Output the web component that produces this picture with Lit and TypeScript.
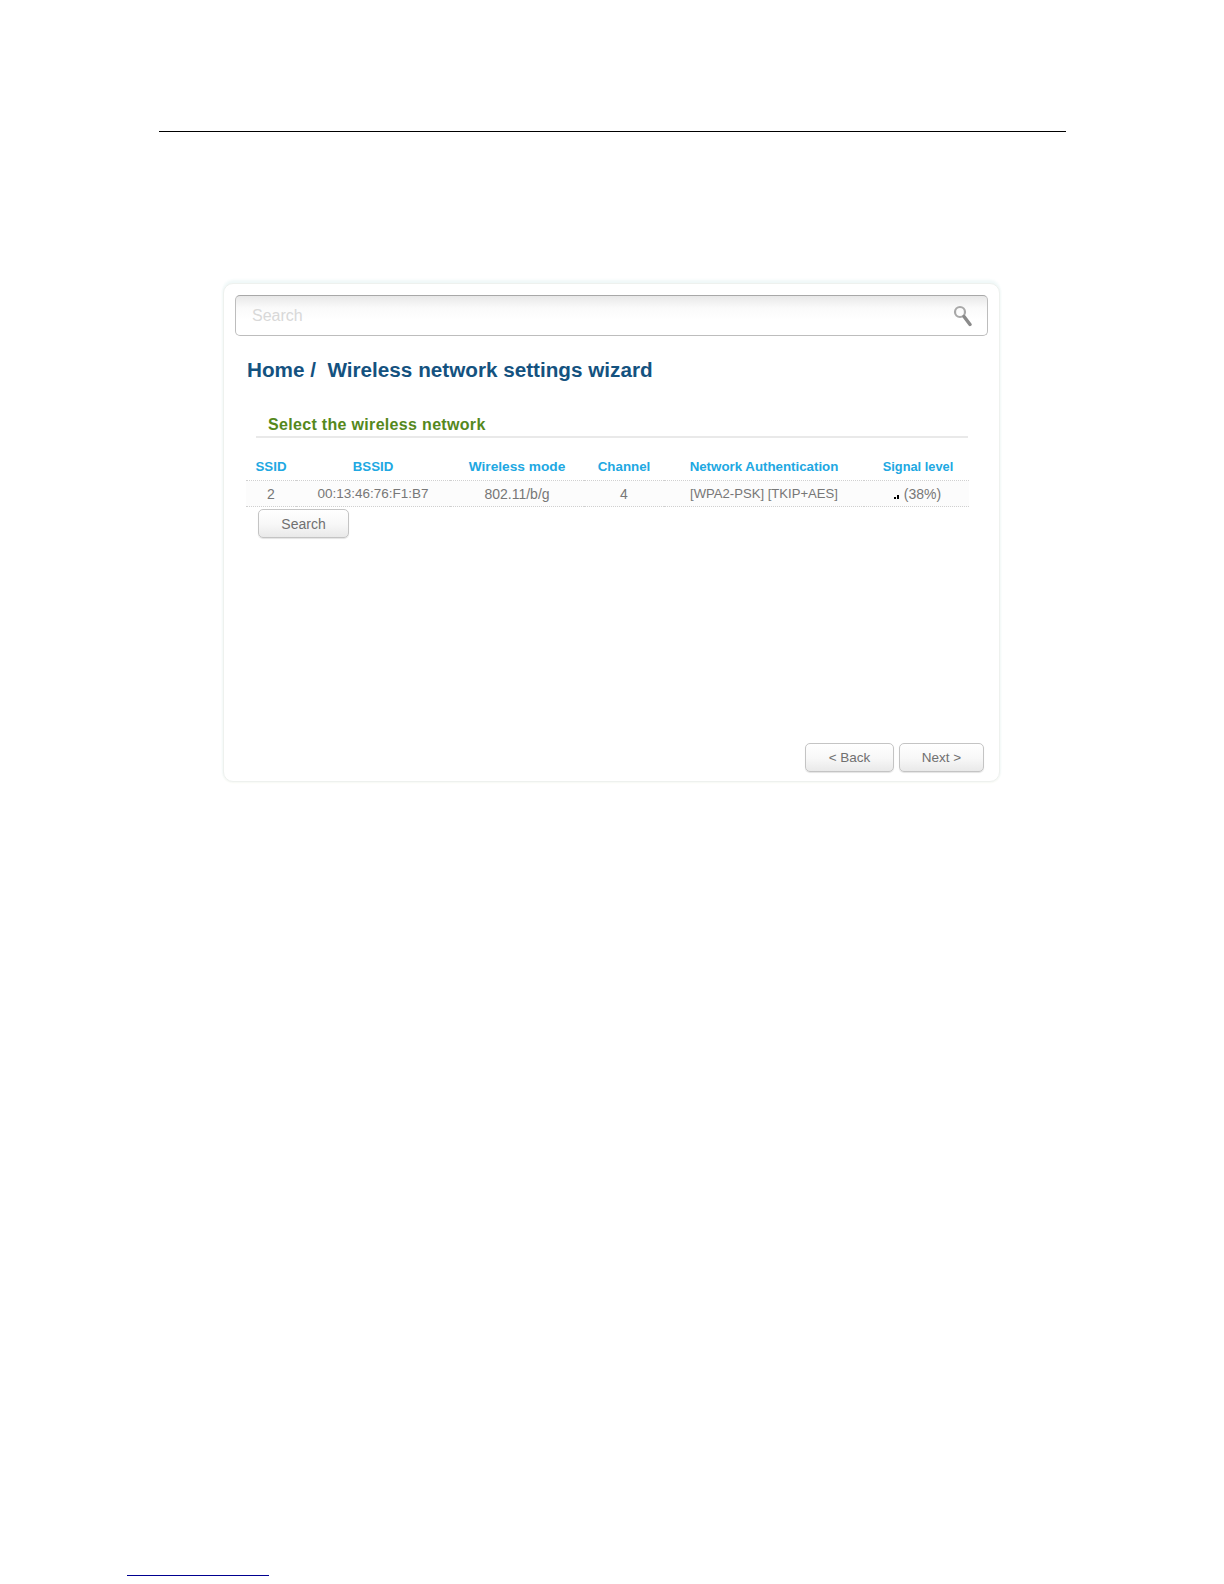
import { LitElement, html, css } from "lit";
import { customElement } from "lit/decorators.js";

const HEADERS = ["SSID", "BSSID", "Wireless mode", "Channel", "Network Authentication", "Signal level"];

@customElement("app-root")
export class AppRoot extends LitElement {
  static styles = css`
    :host { display: block; height: 1584px; background: #fff; font-family: "Liberation Sans", Arial, sans-serif; overflow: hidden; }
    .page { display: flex; flex-direction: column; height: 1584px; padding-top: 131px; box-sizing: border-box; }
    .rule { height: 1px; background: #000; margin-left: 159px; width: 907px; }
    .panel {
      box-sizing: border-box; margin: 151px 0 0 223px; width: 777px; height: 499px;
      border: 1px solid #eef1ee; border-radius: 10px;
      box-shadow: 0 -3px 3px #f0f8f8, -1px 0 2px #f5f9f9, 1px 0 2px #f5f9f9, 0 1px 2px #f9f9f0;
      padding: 11px 11px 9px 11px; display: flex; flex-direction: column; background: #fff;
    }
    .search {
      box-sizing: border-box; height: 41px; border: 1px solid #bdbdbd; border-top-color: #a8a8a8; border-radius: 5px;
      background: linear-gradient(#e8e8e8, #fafafa 30%, #fff 60%);
      display: flex; align-items: center; justify-content: space-between; padding: 0 15px 0 16px;
      color: #d8d8d8; font-size: 16px;
    }
    .search svg { display: block; }
    h1 { margin: 21px 0 0 12px; font-size: 20.7px; line-height: 26px; font-weight: bold; color: #14527f; white-space: pre; }
    .section { margin: 32px 20px 0 21px; border-bottom: 2px solid #e9e9e9; padding: 0 0 1px 12px; }
    h2 { margin: 0; font-size: 16px; letter-spacing: 0.32px; line-height: 20px; font-weight: bold; color: #55881c; }
    table { border-collapse: collapse; table-layout: fixed; width: 723px; margin: 18px 0 0 11px; }
    th { color: #21a8e2; font-weight: bold; height: 21px; padding: 0 0 3px; border-bottom: 1px dotted #d0d0d0; font-size: 13.3px; }
    th:nth-child(3) { font-size: 13.7px; }
    th:nth-child(6) { font-size: 12.8px; padding-left: 3px; }
    td { color: #777; text-align: center; height: 25px; padding: 0; border-bottom: 1px dotted #d0d0d0; background: #fcfcfc; font-size: 14px; }
    td.mac { font-size: 13.5px; }
    td.auth { font-size: 13.1px; }
    td.signal { padding-left: 2px; }
    .bars { display: inline-flex; align-items: flex-end; gap: 1px; height: 6px; margin-right: 5px; }
    .bars i { display: block; width: 2px; background: #000; }
    .b1 { height: 2px; } .b2 { height: 4px; }
    .btn {
      box-sizing: border-box; height: 29px; border: 1px solid #c4c4c4; border-radius: 5px;
      background: linear-gradient(#fff, #f7f7f7 55%, #e9e9e9);
      color: #707070; font: 14px "Liberation Sans", Arial, sans-serif; padding: 0;
      box-shadow: 0 1px 1px #e4e4e4;
    }
    .search-btn { width: 91px; margin: 2px 0 0 23px; align-self: flex-start; }
    .actions { margin-top: auto; display: flex; justify-content: flex-end; gap: 5px; padding-right: 4px; }
    .back { width: 89px; font-size: 13.5px; } .next { width: 85px; font-size: 13.5px; }
    .foot { margin: auto 0 8px 127px; width: 142px; height: 1px; background: #000090; }
  `;

  render() {
    return html`<div class="page">
      <div class="rule"></div>
      <div class="panel">
        <div class="search">
          <span>Search</span>
          <svg width="22" height="24" viewBox="0 0 22 24">
            <circle cx="10" cy="8" r="5" fill="none" stroke="#a8a8a8" stroke-width="2.2"></circle>
            <path d="M14 12.5 L20 20.5" stroke="#8a8a8a" stroke-width="3.4" stroke-linecap="round"></path>
          </svg>
        </div>
        <h1>Home /  Wireless network settings wizard</h1>
        <div class="section"><h2>Select the wireless network</h2></div>
        <table>
          <colgroup>
            <col style="width:50px" /><col style="width:154px" /><col style="width:134px" />
            <col style="width:80px" /><col style="width:200px" /><col style="width:105px" />
          </colgroup>
          <thead><tr>${HEADERS.map((h) => html`<th>${h}</th>`)}</tr></thead>
          <tbody><tr>
            <td>2</td><td class="mac">00:13:46:76:F1:B7</td><td>802.11/b/g</td><td>4</td><td class="auth">[WPA2-PSK] [TKIP+AES]</td>
            <td class="signal"><span class="bars"><i class="b1"></i><i class="b2"></i></span>(38%)</td>
          </tr></tbody>
        </table>
        <button class="btn search-btn">Search</button>
        <div class="actions">
          <button class="btn back">&lt; Back</button>
          <button class="btn next">Next &gt;</button>
        </div>
      </div>
      <div class="foot"></div>
    </div>`;
  }
}
